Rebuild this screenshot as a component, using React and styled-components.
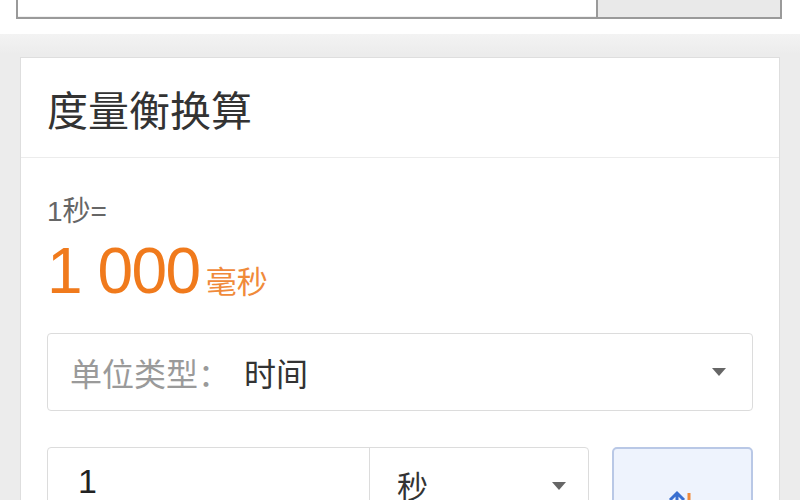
import React from "react";
import styled, { createGlobalStyle } from "styled-components";

const Global = createGlobalStyle`
  html, body { margin: 0; padding: 0; }
  body {
    width: 800px; height: 500px; overflow: hidden;
    background: #ededed;
    font-family: "Liberation Sans", Arial, "Noto Sans CJK SC", sans-serif;
  }
`;

const Page = styled.div`
  width: 800px;
  height: 500px;
  overflow: hidden;
  display: flex;
  flex-direction: column;
`;

const TopBar = styled.div`
  flex-shrink: 0;
  height: 34px;
  background: #fff;
  padding: 0 18px 0 16px;
  box-shadow: 0 2px 3px rgba(0,0,0,0.06);
`;

const SearchBox = styled.div`
  display: flex;
  height: 17px;
  border: 2px solid #9a9a9a;
  border-top: none;
`;

const SearchInput = styled.div`
  flex: 1;
  background: #fff;
  border-bottom: 1px solid #f1f1f1;
`;

const SearchButton = styled.div`
  width: 182px;
  background: #e9e9e9;
  border-left: 2px solid #9a9a9a;
`;

const Body = styled.div`
  flex: 1;
  min-height: 0;
  padding: 23px 20px 0 20px;
  background: linear-gradient(#f3f3f3, #ececec 20px);
`;

const Card = styled.div`
  background: #fff;
  border: 1px solid #dedede;
  border-bottom: none;
  height: 100%;
  box-sizing: border-box;
  overflow: hidden;
`;

const CardHeader = styled.div`
  height: 99px;
  display: flex;
  align-items: center;
  padding: 0 26px;
  border-bottom: 1px solid #ececec;
`;

const Title = styled.div`
  font-size: 41px;
  color: #333;
`;

const CardBody = styled.div`
  padding: 38px 26px 0 26px;
`;

const Equation = styled.div`
  font-size: 28px;
  color: #666;
  line-height: 32px;
`;

const Result = styled.div`
  margin-top: 8px;
  color: #f07a1c;
  display: flex;
  align-items: baseline;
  height: 70px;
`;

const ResultNum = styled.span`
  font-size: 64px;
  letter-spacing: -1.5px;
  line-height: 70px;
`;

const ResultUnit = styled.span`
  font-size: 31px;
  margin-left: 6px;
  color: #f08a3a;
`;

const Select = styled.div`
  margin-top: 27px;
  height: 78px;
  box-sizing: border-box;
  border: 1px solid #dcdcdc;
  border-radius: 4px;
  display: flex;
  align-items: center;
  padding: 0 26px 0 22px;
  font-size: 32px;
`;

const SelectLabel = styled.span`
  color: #9a9a9a;
`;

const SelectValue = styled.span`
  color: #333;
  margin-left: 14px;
  flex: 1;
`;

const Caret = styled.span`
  width: 0;
  height: 0;
  border-left: 7px solid transparent;
  border-right: 7px solid transparent;
  border-top: 8px solid #666;
`;

const Row = styled.div`
  margin-top: 36px;
  display: flex;
  gap: 23px;
`;

const Group = styled.div`
  flex: 1;
  display: flex;
  height: 80px;
  box-sizing: border-box;
  border: 1px solid #dcdcdc;
  border-radius: 4px;
`;

const NumField = styled.div`
  width: 322px;
  box-sizing: border-box;
  border-right: 1px solid #dcdcdc;
  padding: 14px 0 0 30px;
  font-size: 34px;
  color: #222;
`;

const UnitField = styled.div`
  flex: 1;
  display: flex;
  align-items: flex-start;
  padding: 14px 22px 0 27px;
  font-size: 31px;
  color: #333;
  span:first-child { flex: 1; }
`;

const UnitCaret = styled(Caret)`
  margin-top: 20px;
`;

const SwapButton = styled.div`
  width: 141px;
  height: 80px;
  box-sizing: border-box;
  background: #eef3fd;
  border: 2px solid #b9c8e6;
  border-radius: 5px;
  display: flex;
  justify-content: center;
  padding-top: 36px;
`;

export default function App() {
  return (
    <Page>
      <Global />
      <TopBar>
        <SearchBox>
          <SearchInput />
          <SearchButton />
        </SearchBox>
      </TopBar>
      <Body>
        <Card>
          <CardHeader>
            <Title>度量衡换算</Title>
          </CardHeader>
          <CardBody>
            <Equation>1秒=</Equation>
            <Result>
              <ResultNum>1 000</ResultNum>
              <ResultUnit>毫秒</ResultUnit>
            </Result>
            <Select>
              <SelectLabel>单位类型：</SelectLabel>
              <SelectValue>时间</SelectValue>
              <Caret />
            </Select>
            <Row>
              <Group>
                <NumField>1</NumField>
                <UnitField>
                  <span>秒</span>
                  <UnitCaret />
                </UnitField>
              </Group>
              <SwapButton>
                <svg width="40" height="40" viewBox="0 0 40 40">
                  <path d="M14 32 V8 M7 15 L14 8 L21 15" stroke="#3a6fd0" strokeWidth="3" fill="none" />
                  <path d="M26 8 V32 M19 25 L26 32 L33 25" stroke="#f08a3a" strokeWidth="3" fill="none" />
                </svg>
              </SwapButton>
            </Row>
          </CardBody>
        </Card>
      </Body>
    </Page>
  );
}
